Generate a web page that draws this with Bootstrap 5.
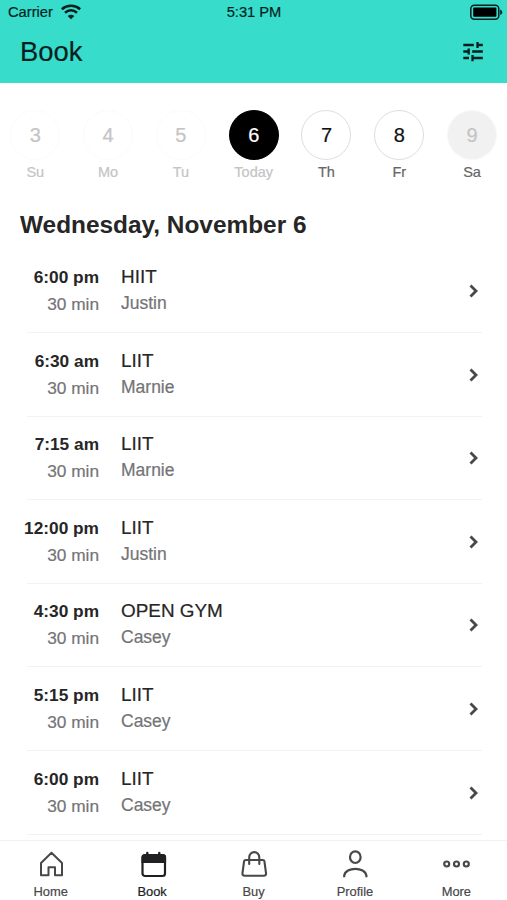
<!DOCTYPE html>
<html lang="en">
<head>
<meta charset="utf-8">
<meta name="viewport" content="width=device-width, initial-scale=1">
<title>Book</title>
<link href="https://cdn.jsdelivr.net/npm/bootstrap@5.3.0/dist/css/bootstrap.min.css" rel="stylesheet">
<style>
  body { font-family: "Liberation Sans", Arial, sans-serif; color: #262626; background: #fff; -webkit-text-stroke: .2px currentColor; }
  .screen { width: 507px; height: 900px; }
  .app-top { background: #38dccb; color: #041f1e; height: 83px; }
  .status { height: 25px; font-size: 14.7px; line-height: 25px; }
  .status > * { flex: 1 1 0; }
  .status-time { padding-right: 7px; }
  .app-title { font-size: 27.4px; line-height: 32px; padding-top: 11px; }
  .filter-icon { margin-top: 17px; margin-right: 24px; }
  .days { padding: 26.5px 0 0 1.3px; gap: 4.8px; }
  .day { width: 68px; flex: none; color: #666; font-size: 14.5px; line-height: 18px; }
  .day-num { width: 50px; height: 50px; font-size: 20px; border: 1px solid #dedede; color: #111; margin-bottom: 3px; }
  .day.past, .day.today { color: #c4c4c4; }
  .day.past .day-num { color: #c4c4c4; border-color: #fbfbfb; }
  .day.today .day-num { background: #000; border-color: #000; color: #fff; }
  .day.off .day-num { background: #f1f1f1; border-color: #f8f8f8; color: #c4c4c4; }
  .date-head { font-size: 24.4px; line-height: 30px; margin: 29px 0 0 20px; -webkit-text-stroke: 0; }
  .slots { margin: 10px 25px 0 27px; }
  .slot { height: 83.6px; border-bottom: 1px solid #f2f2f3; padding-top: 14.5px; }
  .slot-time { width: 80px; margin-left: -8px; margin-right: 22px; line-height: 26px; font-size: 17.3px; white-space: nowrap; }
  .slot-time .fw-bold { -webkit-text-stroke: 0; }
  .slot-name { font-size: 18.9px; line-height: 26px; }
  .slot-sub { font-size: 17.3px; color: #747476; line-height: 26px; }
  .slot-person { font-size: 17.5px; }
  .slot-time .slot-sub { margin-top: 1px; }
  .slot-go { margin: 19px 2px 0 auto; }
  .tabs { height: 60px; border-top: 1px solid #f1f1f1; background: #fff; }
  .tab { color: #48484a; font-size: 12.9px; line-height: 16px; padding-top: 8px; }
  .tab.current { color: #202023; }
  .tab svg { margin-bottom: 5px; }
</style>
<script src="https://cdn.jsdelivr.net/npm/bootstrap@5.3.0/dist/js/bootstrap.bundle.min.js"></script>
</head>
<body>
<div class="screen d-flex flex-column overflow-hidden">
  <header class="app-top flex-shrink-0">
    <div class="status d-flex">
      <div class="d-flex ps-2">Carrier
        <svg class="ms-2" width="20" height="25" viewBox="0 0 20 25" fill="none" stroke="#041f1e" stroke-width="2.500"><path d="M.8 9.200C6 4.700 14 4.700 19.200 9.200M4 12.800c3.700-3.300 8.300-3.300 12 0"/><path d="M10 19.200 6.700 16Q10 13.300 13.300 16Z" fill="#041f1e" stroke="none"/></svg>
      </div>
      <div class="status-time text-center">5:31 PM</div>
      <div class="text-end"><svg class="d-block ms-auto me-1" width="33" height="25" viewBox="0 0 33 25"><rect x=".8" y="5.200" width="28" height="14" rx="3.500" fill="none" stroke="#041f1e" stroke-width="1.500"/><rect x="3.200" y="7.600" width="23.200" height="9.200" rx="1" fill="#000"/><path d="M30.200 9.500q2 .6 2 2.700t-2 2.700z" fill="#041f1e"/></svg></div>
    </div>
    <div class="d-flex justify-content-between">
      <h1 class="app-title fw-normal mb-0 ms-3 ps-1">Book</h1>
      <svg class="filter-icon" width="20" height="20" viewBox="0 0 20 20" stroke="#041f1e" stroke-width="2.300" fill="none"><path d="M.3 3h10.500M14.500 0v6M14.500 3H19.800M.3 9.500H6M5.700 6.500v6M9.200 9.500h10.600M.3 16H6M9.500 13v6.300M9.500 16h10.300"/></svg>
    </div>
  </header>

  <main class="flex-grow-1 overflow-hidden">
    <div class="days d-flex">
      <div class="day past d-flex flex-column align-items-center"><div class="day-num rounded-circle d-flex align-items-center justify-content-center">3</div>Su</div>
      <div class="day past d-flex flex-column align-items-center"><div class="day-num rounded-circle d-flex align-items-center justify-content-center">4</div>Mo</div>
      <div class="day past d-flex flex-column align-items-center"><div class="day-num rounded-circle d-flex align-items-center justify-content-center">5</div>Tu</div>
      <div class="day today d-flex flex-column align-items-center"><div class="day-num rounded-circle d-flex align-items-center justify-content-center">6</div>Today</div>
      <div class="day d-flex flex-column align-items-center"><div class="day-num rounded-circle d-flex align-items-center justify-content-center">7</div>Th</div>
      <div class="day d-flex flex-column align-items-center"><div class="day-num rounded-circle d-flex align-items-center justify-content-center">8</div>Fr</div>
      <div class="day off d-flex flex-column align-items-center"><div class="day-num rounded-circle d-flex align-items-center justify-content-center">9</div>Sa</div>
    </div>
    <h2 class="date-head fw-bold">Wednesday, November 6</h2>
    <div class="slots">
      <div class="slot d-flex align-items-start"><div class="slot-time text-end"><div class="fw-bold">6:00 pm</div><div class="slot-sub">30 min</div></div><div><div class="slot-name">HIIT</div><div class="slot-sub slot-person">Justin</div></div><svg class="slot-go" width="12" height="16" viewBox="0 0 12 16" fill="none" stroke="#48484a" stroke-width="2.800"><path d="m2.500 2.500 5.500 5.500-5.500 5.500"/></svg></div>
      <div class="slot d-flex align-items-start"><div class="slot-time text-end"><div class="fw-bold">6:30 am</div><div class="slot-sub">30 min</div></div><div><div class="slot-name">LIIT</div><div class="slot-sub slot-person">Marnie</div></div><svg class="slot-go" width="12" height="16" viewBox="0 0 12 16" fill="none" stroke="#48484a" stroke-width="2.800"><path d="m2.500 2.500 5.500 5.500-5.500 5.500"/></svg></div>
      <div class="slot d-flex align-items-start"><div class="slot-time text-end"><div class="fw-bold">7:15 am</div><div class="slot-sub">30 min</div></div><div><div class="slot-name">LIIT</div><div class="slot-sub slot-person">Marnie</div></div><svg class="slot-go" width="12" height="16" viewBox="0 0 12 16" fill="none" stroke="#48484a" stroke-width="2.800"><path d="m2.500 2.500 5.500 5.500-5.500 5.500"/></svg></div>
      <div class="slot d-flex align-items-start"><div class="slot-time text-end"><div class="fw-bold">12:00 pm</div><div class="slot-sub">30 min</div></div><div><div class="slot-name">LIIT</div><div class="slot-sub slot-person">Justin</div></div><svg class="slot-go" width="12" height="16" viewBox="0 0 12 16" fill="none" stroke="#48484a" stroke-width="2.800"><path d="m2.500 2.500 5.500 5.500-5.500 5.500"/></svg></div>
      <div class="slot d-flex align-items-start"><div class="slot-time text-end"><div class="fw-bold">4:30 pm</div><div class="slot-sub">30 min</div></div><div><div class="slot-name">OPEN GYM</div><div class="slot-sub slot-person">Casey</div></div><svg class="slot-go" width="12" height="16" viewBox="0 0 12 16" fill="none" stroke="#48484a" stroke-width="2.800"><path d="m2.500 2.500 5.500 5.500-5.500 5.500"/></svg></div>
      <div class="slot d-flex align-items-start"><div class="slot-time text-end"><div class="fw-bold">5:15 pm</div><div class="slot-sub">30 min</div></div><div><div class="slot-name">LIIT</div><div class="slot-sub slot-person">Casey</div></div><svg class="slot-go" width="12" height="16" viewBox="0 0 12 16" fill="none" stroke="#48484a" stroke-width="2.800"><path d="m2.500 2.500 5.500 5.500-5.500 5.500"/></svg></div>
      <div class="slot d-flex align-items-start"><div class="slot-time text-end"><div class="fw-bold">6:00 pm</div><div class="slot-sub">30 min</div></div><div><div class="slot-name">LIIT</div><div class="slot-sub slot-person">Casey</div></div><svg class="slot-go" width="12" height="16" viewBox="0 0 12 16" fill="none" stroke="#48484a" stroke-width="2.800"><path d="m2.500 2.500 5.500 5.500-5.500 5.500"/></svg></div>
    </div>
  </main>

  <nav class="tabs nav nav-fill flex-nowrap flex-shrink-0">
    <div class="tab col d-flex flex-column align-items-center"><svg width="30" height="30" viewBox="0 0 30 30" fill="none" stroke="#48484a" stroke-width="2" stroke-linejoin="round"><path d="M5 26.300V14L15.500 3.800 26 14v12.300h-7v-8h-6.500v8z"/></svg>Home</div>
    <div class="tab current col d-flex flex-column align-items-center"><svg width="30" height="30" viewBox="0 0 30 30"><path d="M10.300 4v3M22.300 4v3" stroke="#202023" stroke-width="2.400" stroke-linecap="round"/><rect x="5.500" y="6.200" width="22.500" height="20.800" rx="2.500" fill="none" stroke="#202023" stroke-width="2.200"/><path d="M4.500 14V8q0-2.800 2.800-2.800h19q2.800 0 2.800 2.800V14z" fill="#202023"/></svg>Book</div>
    <div class="tab col d-flex flex-column align-items-center"><svg width="30" height="30" viewBox="0 0 30 30" fill="none" stroke="#48484a" stroke-width="2.100" stroke-linejoin="round" stroke-linecap="round"><path d="M6.800 11h16.900q1.500 0 1.700 1.200l1.600 11.800q.4 2.700-2.300 2.700H5.800q-2.700 0-2.300-2.700L5.100 12.200Q5.300 11 6.800 11zM10.200 15V8.500c0-7.200 10.100-7.200 10.100 0V15"/></svg>Buy</div>
    <div class="tab col d-flex flex-column align-items-center"><svg width="30" height="30" viewBox="0 0 30 30" fill="none" stroke="#48484a" stroke-width="2.200"><ellipse cx="15.300" cy="8.200" rx="5.300" ry="5.800"/><path d="M4.200 28.200v-1.500c1.200-9.200 21-9.200 22.200 0v1.500"/></svg>Profile</div>
    <div class="tab col d-flex flex-column align-items-center"><svg width="30" height="30" viewBox="0 0 30 30" fill="none" stroke="#48484a" stroke-width="2.200"><circle cx="5.700" cy="15" r="2.500"/><circle cx="15.500" cy="15" r="2.500"/><circle cx="25.300" cy="15" r="2.500"/></svg>More</div>
  </nav>
</div>
</body>
</html>
